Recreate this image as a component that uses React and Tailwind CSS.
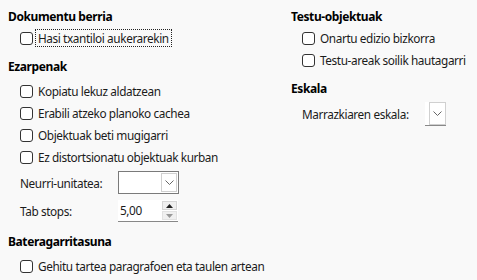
import React from 'react';

const font = { fontFamily: '"Noto Sans", "Open Sans", sans-serif' };

const Check = ({ label, focus }) => (
  <div className="flex items-center h-[22px] pl-3">
    <div className="w-[13px] h-[13px] rounded-[3px] border border-[#333] bg-white shrink-0" />
    <span
      className={
        'ml-[4px] leading-[14px] px-[1px] ' +
        (focus ? 'outline outline-1 outline-dotted outline-[#222] outline-offset-[1px]' : '')
      }
    >
      {label}
    </span>
  </div>
);

const Heading = ({ children }) => (
  <div className="h-5 flex items-center font-bold text-black text-[12px]">{children}</div>
);

const Chevron = () => (
  <svg width="9" height="5" viewBox="0 0 9 5" fill="none">
    <path d="M0.5 0.5 L4.5 4.5 L8.5 0.5" stroke="#666" strokeWidth="1" />
  </svg>
);

const App = () => {
  return (
    <div
      className="w-[477px] h-[280px] bg-[#f9f9f9] text-[11.8px] text-[#1b1b1b] overflow-hidden flex tracking-[-0.4px]"
      style={font}
    >
      {/* Left column */}
      <div className="w-[291px] shrink-0 pl-2 pt-[7px] flex flex-col">
        <Heading>Dokumentu berria</Heading>
        <Check label="Hasi txantiloi aukerarekin" focus />
        <div className="mt-2">
          <Heading>Ezarpenak</Heading>
        </div>
        <div className="mt-[3px]">
          <Check label="Kopiatu lekuz aldatzean" />
          <Check label="Erabili atzeko planoko cachea" />
          <Check label="Objektuak beti mugigarri" />
          <Check label="Ez distortsionatu objektuak kurban" />
        </div>
        <div className="flex items-center h-6 mt-[2px] pl-3">
          <span className="w-[98px] pt-[3px]">Neurri-unitatea:</span>
          <div className="w-[61px] h-[23px] border border-[#7a7a7a] bg-white flex justify-end p-[1px]">
            <div className="w-[16px] h-full border border-[#d0d0d0] bg-white flex items-center justify-center">
              <Chevron />
            </div>
          </div>
        </div>
        <div className="flex items-center h-6 mt-[5px] pl-3">
          <span className="w-[98px] pt-[1px]">Tab stops:</span>
          <div className="w-[60px] h-[22px] bg-white border-b border-[#888] flex items-center justify-between pl-[2px] pr-[1px]">
            <span>5,00</span>
            <div className="flex flex-col w-[15px] gap-[1px]">
              <div className="h-[9px] bg-[#f0f0f0] border border-[#d6d6d6] flex items-center justify-center">
                <svg width="7" height="4" viewBox="0 0 7 4"><path d="M0 4 L3.5 0 L7 4 Z" fill="#222" /></svg>
              </div>
              <div className="h-[9px] bg-[#f0f0f0] border border-[#e2e2e2] flex items-center justify-center">
                <svg width="7" height="4" viewBox="0 0 7 4"><path d="M0 0 L3.5 4 L7 0 Z" fill="#999" /></svg>
              </div>
            </div>
          </div>
        </div>
        <div className="mt-[9px]">
          <Heading>Bateragarritasuna</Heading>
        </div>
        <div className="mt-[3px]">
          <Check label="Gehitu tartea paragrafoen eta taulen artean" />
        </div>
      </div>

      {/* Right column */}
      <div className="flex-1 pt-[7px] flex flex-col">
        <Heading>Testu-objektuak</Heading>
        <div className="-ml-px">
          <Check label="Onartu edizio bizkorra" />
          <Check label="Testu-areak soilik hautagarri" />
        </div>
        <div className="mt-2">
          <Heading>Eskala</Heading>
        </div>
        <div className="flex items-center h-6 mt-[3px] pl-[11px]">
          <span className="w-[123px] pt-[1px]">Marrazkiaren eskala:</span>
          <div className="w-[21px] h-[24px] bg-white border-b border-[#888] flex justify-end pl-[4px]">
            <div className="w-[17px] h-full border border-[#d0d0d0] flex items-center justify-center">
              <Chevron />
            </div>
          </div>
        </div>
      </div>
    </div>
  );
};

export default App;
